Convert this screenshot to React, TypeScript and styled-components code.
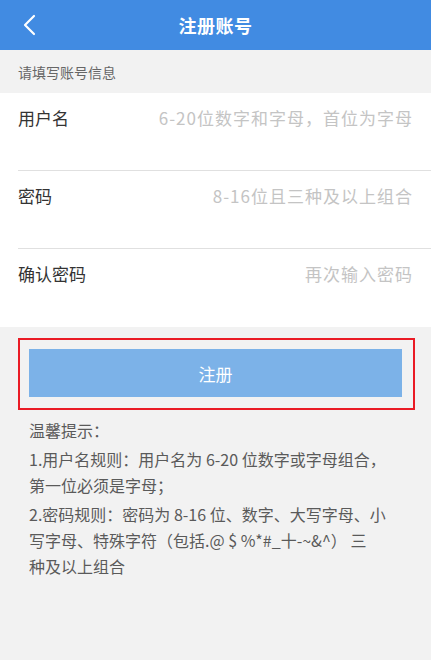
import styled, { createGlobalStyle } from "styled-components";

const GlobalStyle = createGlobalStyle`
  * {
    box-sizing: border-box;
  }
  body {
    margin: 0;
    background: #f2f2f2;
    font-family: "Noto Sans CJK SC", "Noto Sans", sans-serif;
  }
`;

const Page = styled.div`
  width: 431px;
  min-height: 660px;
  background: #f2f2f2;
`;

const Header = styled.div`
  position: relative;
  height: 50px;
  background: #418be2;
  display: flex;
  align-items: center;
  justify-content: center;
  .back {
    position: absolute;
    left: 20px;
    top: 13px;
    width: 20px;
    height: 24px;
    cursor: pointer;
  }
  .title {
    color: #fff;
    font-size: 18px;
    font-weight: 700;
    letter-spacing: 0.5px;
  }
`;

const SectionTitle = styled.div`
  height: 43px;
  padding-left: 18px;
  display: flex;
  align-items: center;
  font-size: 14px;
  color: #666;
`;

const Form = styled.div`
  background: #fff;
  padding-left: 18px;
`;

const Row = styled.label<{ $last?: boolean }>`
  display: flex;
  align-items: flex-start;
  height: 78px;
  padding: 10px 18px 0 0;
  border-bottom: ${(p) => (p.$last ? "none" : "1px solid #e0e0e0")};
  .label {
    font-size: 17px;
    color: #333;
    white-space: nowrap;
    line-height: 30px;
  }
  input {
    flex: 1;
    min-width: 0;
    border: none;
    outline: none;
    background: transparent;
    text-align: right;
    font-family: inherit;
    font-size: 17px;
    letter-spacing: 1px;
    line-height: 30px;
    padding: 0;
    color: #333;
    &::placeholder {
      color: #c4c4c4;
    }
  }
`;

const ButtonFrame = styled.div`
  margin: 11px 16px 0 18px;
  border: 2px solid #ea1b25;
  padding: 9px 11px 11px 9px;
`;

const SubmitButton = styled.button`
  display: block;
  width: 100%;
  height: 48px;
  border: none;
  background: #7cb2e8;
  color: #fff;
  font-family: inherit;
  font-size: 17px;
  cursor: pointer;
`;

const Tips = styled.div`
  padding: 7px 10px 0 29px;
  font-size: 16px;
  line-height: 26px;
  color: #5a5a5a;
  white-space: nowrap;
  p {
    margin: 0 0 3px;
  }
`;

const BackIcon = () => (
  <svg className="back" viewBox="0 0 20 24" fill="none">
    <polyline
      points="14,3 5,12 14,21"
      stroke="#fff"
      strokeWidth="2.2"
      strokeLinecap="round"
      strokeLinejoin="round"
    />
  </svg>
);

const fields = [
  { label: "用户名", placeholder: "6-20位数字和字母，首位为字母", type: "text" },
  { label: "密码", placeholder: "8-16位且三种及以上组合", type: "password" },
  { label: "确认密码", placeholder: "再次输入密码", type: "password" },
];

export default function App() {
  return (
    <Page>
      <GlobalStyle />
      <Header>
        <BackIcon />
        <div className="title">注册账号</div>
      </Header>
      <SectionTitle>请填写账号信息</SectionTitle>
      <Form>
        {fields.map((f, i) => (
          <Row key={f.label} $last={i === fields.length - 1}>
            <span className="label">{f.label}</span>
            <input type={f.type} placeholder={f.placeholder} />
          </Row>
        ))}
      </Form>
      <ButtonFrame>
        <SubmitButton>注册</SubmitButton>
      </ButtonFrame>
      <Tips>
        <p>温馨提示：</p>
        <p>
          1.用户名规则：用户名为 6-20 位数字或字母组合，
          <br />
          第一位必须是字母；
        </p>
        <p>
          2.密码规则：密码为 8-16 位、数字、大写字母、小
          <br />
          写字母、特殊字符（包括.@ $ %*#_十-~&amp;^） 三
          <br />
          种及以上组合
        </p>
      </Tips>
    </Page>
  );
}
